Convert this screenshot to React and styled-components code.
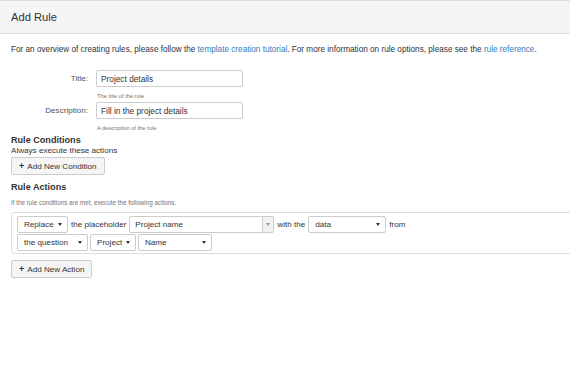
import React from 'react';
import styled, { createGlobalStyle } from 'styled-components';

const GlobalStyle = createGlobalStyle`
  html, body {
    margin: 0;
    padding: 0;
    background: #fff;
    overflow: hidden;
  }
  body {
    font-family: "Liberation Sans", Arial, sans-serif;
    color: #333;
  }
`;

const Header = styled.header`
  height: 32px;
  display: flex;
  align-items: center;
  padding: 0 11px;
  background: #f5f5f5;
  border-top: 1px solid #dcdcdc;
  border-bottom: 1px solid #dcdcdc;
  font-size: 11.2px;
  color: #333;
`;

const Content = styled.main`
  padding: 0 11px;
`;

const Intro = styled.p`
  margin: 10px 0 0;
  font-size: 8.2px;
  line-height: 12px;

  a {
    color: #337ab7;
    text-decoration: none;
  }
`;

const FormRow = styled.div`
  display: flex;
  align-items: center;
  gap: 8px;
  margin-top: ${(p) => p.$top || 0}px;
`;

const Label = styled.label`
  width: 77px;
  text-align: right;
  font-size: 8.1px;
  color: #555;
`;

const TextInput = styled.div`
  box-sizing: border-box;
  width: 147px;
  height: 17px;
  padding: 0 4px;
  display: flex;
  align-items: center;
  border: 1px solid #ccc;
  border-radius: 2px;
  font-size: 8.3px;
  color: #333;
`;

const Help = styled.div`
  margin: 5px 0 0 86px;
  font-size: 5.7px;
  line-height: 8px;
  color: #737373;
  & + ${FormRow} {
    margin-top: 2px;
  }
`;

const SectionTitle = styled.h4`
  margin: ${(p) => p.$top}px 0 0;
  font-size: 9.1px;
  line-height: 11px;
  font-weight: bold;
  color: #333;
`;

const Note = styled.div`
  font-size: ${(p) => p.$size || 8.1}px;
  line-height: ${(p) => p.$line || 10}px;
  margin-top: ${(p) => p.$top || 0}px;
  color: ${(p) => p.$color || '#333'};
`;

const Button = styled.button`
  box-sizing: border-box;
  display: flex;
  align-items: center;
  gap: 3px;
  height: 18px;
  padding: 0 7px;
  margin-top: ${(p) => p.$top}px;
  background: #f5f5f5;
  border: 1px solid #ccc;
  border-radius: 2px;
  font-family: inherit;
  font-size: 8.1px;
  color: #333;
`;

const Plus = styled.span`
  font-weight: bold;
  font-size: 9px;
  line-height: 1;
`;

const ActionPanel = styled.div`
  box-sizing: border-box;
  margin: 5px -30px 0 0;
  height: 42px;
  padding: 3px 6px 2px 5px;
  border: 1px solid #ddd;
  border-radius: 3px;
  display: flex;
  flex-direction: column;
  gap: 1px;
`;

const ActionRow = styled.div`
  display: flex;
  align-items: center;
  gap: 2px;
  height: 17px;
  font-size: 8.1px;
`;

const Word = styled.span`
  padding: 0 1px;
  white-space: nowrap;
`;

const Select = styled.div`
  box-sizing: border-box;
  width: ${(p) => p.$w}px;
  height: 17px;
  padding: 0 5px 0 6px;
  display: flex;
  align-items: center;
  justify-content: space-between;
  border: 1px solid #ccc;
  border-radius: 2px;
  background: #fff;
  font-size: 8.1px;
`;

const Caret = styled.span`
  width: 0;
  height: 0;
  border-left: 2px solid transparent;
  border-right: 2px solid transparent;
  border-top: 3px solid #333;
`;

const Combo = styled.div`
  box-sizing: border-box;
  width: 145px;
  height: 17px;
  display: flex;
  border: 1px solid #ccc;
  border-radius: 2px;
  background: #fff;
  overflow: hidden;
`;

const ComboText = styled.div`
  flex: 1;
  display: flex;
  align-items: center;
  padding: 0 5px;
  font-size: 8.1px;
`;

const ComboArrow = styled.div`
  width: 10px;
  display: flex;
  align-items: center;
  justify-content: center;
  background: #f1f1f1;
  border-left: 1px solid #ccc;

  ${Caret} {
    border-top-color: #999;
  }
`;

const Dropdown = ({ w, children }) => (
  <Select $w={w}>
    <span>{children}</span>
    <Caret />
  </Select>
);

export default function App() {
  return (
    <>
      <GlobalStyle />
      <Header>Add Rule</Header>
      <Content>
        <Intro>
          For an overview of creating rules, please follow the{' '}
          <a href="#tutorial">template creation tutorial</a>. For more information on rule options, please see the{' '}
          <a href="#reference">rule reference</a>.
        </Intro>

        <FormRow $top={14}>
          <Label>Title:</Label>
          <TextInput>Project details</TextInput>
        </FormRow>
        <Help>The title of the rule</Help>
        <FormRow>
          <Label>Description:</Label>
          <TextInput>Fill in the project details</TextInput>
        </FormRow>
        <Help>A description of the rule</Help>

        <SectionTitle $top={3}>Rule Conditions</SectionTitle>
        <Note>Always execute these actions</Note>
        <Button $top={1}>
          <Plus>+</Plus> Add New Condition
        </Button>

        <SectionTitle $top={7}>Rule Actions</SectionTitle>
        <Note $size={6.3} $line={8} $top={6} $color="#737373">
          If the rule conditions are met, execute the following actions.
        </Note>

        <ActionPanel>
          <ActionRow>
            <Dropdown w={51}>Replace</Dropdown>
            <Word>the placeholder</Word>
            <Combo>
              <ComboText>Project name</ComboText>
              <ComboArrow>
                <Caret />
              </ComboArrow>
            </Combo>
            <Word>with the</Word>
            <Dropdown w={78}>data</Dropdown>
            <Word>from</Word>
          </ActionRow>
          <ActionRow>
            <Dropdown w={71}>the question</Dropdown>
            <Dropdown w={46}>Project</Dropdown>
            <Dropdown w={74}>Name</Dropdown>
          </ActionRow>
        </ActionPanel>

        <Button $top={6}>
          <Plus>+</Plus> Add New Action
        </Button>
      </Content>
    </>
  );
}
